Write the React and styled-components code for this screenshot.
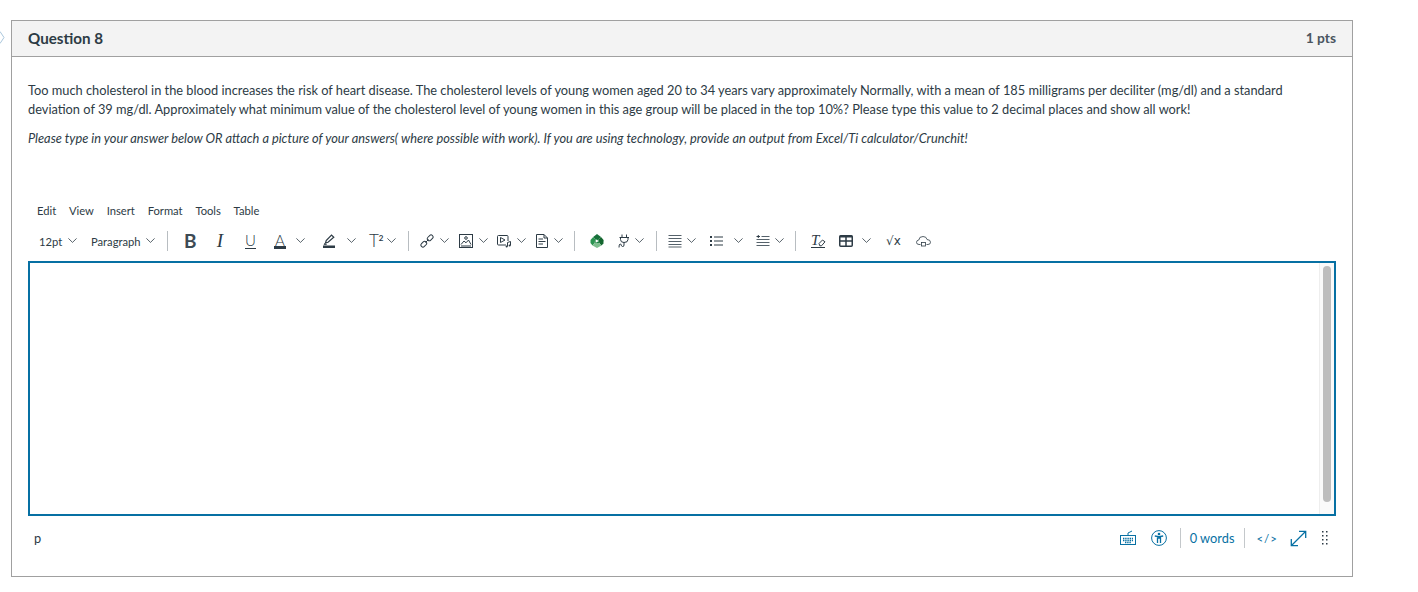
import React from 'react';
import styled, { createGlobalStyle } from 'styled-components';

const GlobalStyle = createGlobalStyle`
  html, body {
    margin: 0;
    padding: 0;
    background: #fff;
    font-family: Lato, "Open Sans", sans-serif;
    color: #2d3b45;
  }
`;

const INK = '#2d3b45';
const BLUE = '#0770a3';

const Page = styled.div`
  position: relative;
  width: 1418px;
  height: 592px;
  padding: 20px 0 0 11px;
  box-sizing: border-box;
  overflow: hidden;
`;

const NavMark = styled.svg`
  position: absolute;
  left: -6px;
  top: 31px;
`;

const Card = styled.section`
  width: 1342px;
  height: 557px;
  box-sizing: border-box;
  border: 1px solid #a0a0a0;
  display: flex;
  flex-direction: column;
`;

const Header = styled.header`
  height: 36px;
  box-sizing: border-box;
  padding: 0 16px 2px;
  background: #f3f3f3;
  border-bottom: 1px solid #a0a0a0;
  display: flex;
  align-items: center;
  justify-content: space-between;
`;

const Title = styled.h2`
  margin: 0;
  font-size: 15.2px;
  font-weight: 700;
  color: ${INK};
`;

const Points = styled.span`
  font-size: 13.8px;
  font-weight: 700;
  color: #4a5560;
`;

const Body = styled.div`
  padding: 24px 16px 0;
  height: 119px;
  box-sizing: border-box;
`;

const Paragraph = styled.p`
  margin: 0 0 10px;
  font-size: 12.8px;
  line-height: 19.2px;
  font-style: ${p => (p.$italic ? 'italic' : 'normal')};
  color: ${INK};
`;

const Editor = styled.div`
  padding: 0 16px;
`;

const MenuBar = styled.nav`
  height: 30px;
  padding-left: 9px;
  display: flex;
  align-items: center;
  gap: 12.8px;
  margin-top: 19px;
`;

const MenuItem = styled.span`
  font-size: 11.2px;
  color: ${INK};
`;

const Toolbar = styled.div`
  height: 32px;
  display: flex;
  align-items: center;
  padding-left: 11px;
`;

const Tool = styled.div`
  width: ${p => p.$w}px;
  flex: none;
  display: flex;
  align-items: center;
  gap: ${p => p.$gap || 0}px;
  font-size: 11.2px;
  color: ${INK};
`;

const Sep = styled.div`
  width: 1px;
  height: 20px;
  flex: none;
  background: #b8bdc1;
  margin-right: ${p => p.$after}px;
`;

const GlyphBold = styled.span`
  font-family: Lato, sans-serif;
  font-size: 19px;
  line-height: 16px;
  font-weight: 700;
  color: #3d4a54;
`;

const GlyphItalic = styled.span`
  font-family: "Liberation Serif", serif;
  font-size: 19px;
  line-height: 16px;
  font-style: italic;
  color: ${INK};
  width: 10px;
  text-align: center;
`;

const GlyphUnder = styled.span`
  font-size: 15px;
  line-height: 13px;
  font-weight: 300;
  color: ${INK};
  width: 11px;
  text-align: center;
  border-bottom: 1px solid ${INK};
  padding-bottom: 1px;
`;

const GlyphColor = styled.span`
  font-size: 15px;
  line-height: 12px;
  font-weight: 300;
  color: ${INK};
  width: 12px;
  text-align: center;
  border-bottom: 3px solid ${INK};
`;

const GlyphSuper = styled.span`
  font-size: 17px;
  line-height: 16px;
  font-weight: 300;
  color: ${INK};
  width: 16px;
  white-space: nowrap;

  sup {
    font-size: 8px;
    font-weight: 700;
    line-height: 0;
    vertical-align: 6px;
  }
`;

const GlyphMath = styled.span`
  font-family: "DejaVu Sans", sans-serif;
  font-size: 12px;
  color: ${INK};
`;

const ClearWrap = styled.span`
  display: block;
  width: 14px;
  height: 14px;
  font-family: "Liberation Serif", serif;
  font-style: italic;
  font-size: 15px;
  line-height: 12px;
  color: ${INK};
  position: relative;
  border-bottom: 1px solid ${INK};
  box-sizing: border-box;
`;

const Area = styled.div`
  height: 255px;
  box-sizing: border-box;
  border: 2px solid ${BLUE};
  margin-top: 4px;
  display: flex;
  justify-content: flex-end;
`;

const Track = styled.div`
  width: 15px;
  background: #fafafa;
  border-left: 1px solid #eeeeee;
  padding: 3px 3px 12px 3px;
  box-sizing: border-box;
  display: flex;
`;

const Thumb = styled.div`
  flex: 1;
  background: #bdbdbd;
  border-radius: 5px;
`;

const StatusBar = styled.div`
  height: 44px;
  display: flex;
  align-items: center;
  justify-content: space-between;
  padding: 0 8px 0 6px;
`;

const PathLabel = styled.span`
  font-size: 12.8px;
  color: ${INK};
`;

const StatusRight = styled.div`
  display: flex;
  align-items: center;
`;

const StatusIcon = styled.svg`
  display: block;
  flex: none;
  margin-left: ${p => p.$ml || 0}px;
  color: ${p => p.$muted ? INK : BLUE};
`;

const Words = styled.span`
  font-size: 12.8px;
  color: ${BLUE};
  padding: 0 10px 0 9px;
  margin: 0 11px 0 13px;
  border-left: 1px solid #c4c8cb;
  border-right: 1px solid #c4c8cb;
  line-height: 20px;
`;

const CodeLabel = styled.span`
  font-size: 11.5px;
  letter-spacing: 1px;
  color: ${BLUE};
`;

const Icon = ({ children, w = 14, h = 14, vb = '0 0 14 14' }) => (
  <svg width={w} height={h} viewBox={vb} fill="none" stroke={INK} strokeWidth="1" style={{ display: 'block', flex: 'none' }}>
    {children}
  </svg>
);

const Chevron = () => (
  <svg width="9" height="5" viewBox="0 0 9 5" fill="none" stroke={INK} strokeWidth="0.8" style={{ display: 'block', flex: 'none', marginTop: -2 }}>
    <path d="M0.4 0.4 L4.5 4.4 L8.6 0.4" />
  </svg>
);

export default function App() {
  return (
    <Page>
      <GlobalStyle />
      <NavMark width="12" height="13" viewBox="0 0 12 13" fill="none" stroke="#a9c6dc" strokeWidth="1">
        <path d="M1 0.5 H6 L10 6.5 L6 12.5 H1" />
      </NavMark>
      <Card>
        <Header>
          <Title>Question 8</Title>
          <Points>1 pts</Points>
        </Header>
        <Body>
          <Paragraph>
            Too much cholesterol in the blood increases the risk of heart disease. The cholesterol levels of young women aged 20 to 34 years vary approximately Normally, with a mean of 185 milligrams per deciliter (mg/dl) and a standard deviation of 39 mg/dl. Approximately what minimum value of the cholesterol level of young women in this age group will be placed in the top 10%? Please type this value to 2 decimal places and show all work!
          </Paragraph>
          <Paragraph $italic>
            Please type in your answer below OR attach a picture of your answers( where possible with work). If you are using technology, provide an output from Excel/Ti calculator/Crunchit!
          </Paragraph>
        </Body>
        <Editor>
          <MenuBar>
            <MenuItem>Edit</MenuItem>
            <MenuItem>View</MenuItem>
            <MenuItem>Insert</MenuItem>
            <MenuItem>Format</MenuItem>
            <MenuItem>Tools</MenuItem>
            <MenuItem>Table</MenuItem>
          </MenuBar>
          <Toolbar>
            <Tool $w={52} $gap={6}>12pt <Chevron /></Tool>
            <Tool $w={76} $gap={5}>Paragraph <Chevron /></Tool>
            <Sep $after={16} />
            <Tool $w={31}><GlyphBold>B</GlyphBold></Tool>
            <Tool $w={30}><GlyphItalic>I</GlyphItalic></Tool>
            <Tool $w={29}><GlyphUnder>U</GlyphUnder></Tool>
            <Tool $w={49} $gap={10}><GlyphColor>A</GlyphColor><Chevron /></Tool>
            <Tool $w={46} $gap={12}>
              <Icon w={12} vb="0 0 12 14">
                <path d="M2.5 9 L3.2 6.5 L8.5 1 L10.8 3.2 L5 8.3 Z" strokeWidth="1.2" />
                <path d="M2.2 9 L1.2 10.5 L3.8 10.2" />
                <rect x="0" y="11.5" width="12" height="2.5" fill={INK} stroke="none" />
              </Icon>
              <Chevron />
            </Tool>
            <Tool $w={39} $gap={2}><GlyphSuper>T<sup>2</sup></GlyphSuper><Chevron /></Tool>
            <Sep $after={11} />
            <Tool $w={39} $gap={6}>
              <Icon>
                <rect x="-3.2" y="-2" width="6.4" height="4" rx="2" transform="translate(3.8 10.2) rotate(-45)" />
                <rect x="-3.2" y="-2" width="6.4" height="4" rx="2" transform="translate(10.2 3.8) rotate(-45)" />
                <path d="M5.5 8.5 L8.5 5.5" />
              </Icon>
              <Chevron />
            </Tool>
            <Tool $w={38} $gap={6}>
              <Icon>
                <rect x="0.5" y="0.5" width="13" height="13" />
                <circle cx="7" cy="4" r="1.3" />
                <path d="M2 10.5 L5 7 L7 8.8 L9.5 6 L12 10.5 M2 12 H12" />
              </Icon>
              <Chevron />
            </Tool>
            <Tool $w={39} $gap={6}>
              <Icon>
                <path d="M9 11 H1.5 Q0.5 11 0.5 10 V2.5 Q0.5 1.5 1.5 1.5 H10 Q11 1.5 11 2.5 V7" />
                <path d="M3.5 3.5 L8 6 L3.5 8.5 Z" />
                <path d="M10.5 8.5 V12.5 M13.5 7.5 V11.5 M10.5 8.5 L13.5 7.5" />
                <circle cx="9.6" cy="12.6" r="1" fill={INK} stroke="none" />
                <circle cx="12.6" cy="11.6" r="1" fill={INK} stroke="none" />
              </Icon>
              <Chevron />
            </Tool>
            <Tool $w={38} $gap={6}>
              <Icon w={12} vb="0 0 12 14">
                <path d="M0.5 0.5 H8 L11.5 4 V13.5 H0.5 Z M8 0.5 V4 H11.5" />
                <path d="M2.5 5 H7 M2.5 7.5 H9.5 M2.5 10 H7" />
              </Icon>
              <Chevron />
            </Tool>
            <Sep $after={15} />
            <Tool $w={28}>
              <Icon>
                <path d="M7 0 L11 3 L8.8 5 L5.2 5 L3.2 3 Z" fill="#17703a" stroke="none" />
                <path d="M0.5 6 L3.2 3 L5.2 5 L4.6 9 L2.5 11.5 L0.5 9 Z" fill="#2b9450" stroke="none" />
                <path d="M11 3 L13.6 6 L13.4 9.5 L11.5 11.5 L9.2 9 L8.8 5 Z" fill="#14662f" stroke="none" />
                <path d="M2.5 11.5 L4.6 9 L9.2 9 L11.5 11.5 L7 14 Z" fill="#7dbd8d" stroke="none" />
                <path d="M4.8 5 L8.8 5 L9.2 9 L4.6 9 Z" fill="#1f8445" stroke="none" />
                <path d="M5.6 5.2 L9 7 L5.6 8.8 Z" fill="#ffffff" stroke="none" />
              </Icon>
            </Tool>
            <Tool $w={38} $gap={5}>
              <Icon w={12} vb="0 0 12 14">
                <path d="M4 0.5 V3.5 M8.5 0.5 V3.5 M1.5 3.5 H11 M2.5 3.5 V5.5 Q2.5 8.5 6 8.5 Q10 8.5 10 5.5 V3.5" />
                <path d="M6 8.5 V11 Q6 12.8 4.5 12.5 Q3.2 12.2 3 10.5 Q2.8 9.8 2 10 Q1 10.5 1 13.5" />
              </Icon>
              <Chevron />
            </Tool>
            <Sep $after={11} />
            <Tool $w={42} $gap={5}>
              <Icon>
                <path d="M0.5 1.5 H13.5 M0.5 4.5 H13.5 M0.5 7.5 H13.5 M0.5 10.5 H13.5 M0.5 13 H13.5" strokeWidth="1" stroke="#56626b" />
              </Icon>
              <Chevron />
            </Tool>
            <Tool $w={46} $gap={10}>
              <Icon>
                <rect x="0" y="2" width="2" height="2" fill={INK} stroke="none" />
                <rect x="0" y="6" width="2" height="2" fill={INK} stroke="none" />
                <rect x="0" y="10" width="2" height="2" fill={INK} stroke="none" />
                <path d="M4 3 H13 M4 7 H13 M4 11 H13" />
              </Icon>
              <Chevron />
            </Tool>
            <Tool $w={39} $gap={5}>
              <Icon>
                <path d="M5.5 2.5 H13.5 M0.5 5.5 H13.5 M0.5 8.5 H13.5 M0.5 11.5 H13.5" stroke="#56626b" />
                <path d="M0.5 2.5 H4 M2.3 1 V4" />
              </Icon>
              <Chevron />
            </Tool>
            <Sep $after={15} />
            <Tool $w={28}>
              <ClearWrap>
                T
                <svg width="8" height="8" viewBox="0 0 8 8" fill="#fff" stroke={INK} strokeWidth="1" style={{ position: 'absolute', right: -1, bottom: 0 }}>
                  <path d="M1 4.5 L4.5 1 L7 2.8 L3.5 6.8 H1.8 Z" />
                </svg>
              </ClearWrap>
            </Tool>
            <Tool $w={47} $gap={9}>
              <Icon>
                <rect x="0.75" y="1.75" width="12.5" height="10.5" rx="1" strokeWidth="1.5" />
                <path d="M0.75 7 H13.25 M7 1.75 V12.25" strokeWidth="1.5" />
                <path d="M0.75 2.5 H13.25" strokeWidth="2" />
              </Icon>
              <Chevron />
            </Tool>
            <Tool $w={30}><GlyphMath>√x</GlyphMath></Tool>
            <Tool $w={16}>
              <Icon w={15} vb="0 0 15 14">
                <path d="M4.5 10.5 H3 Q0.5 10.5 0.5 8.3 Q0.5 6.3 2.8 6 Q3 2.5 7 2.5 Q10.5 2.5 11 5.5 Q14.5 5.7 14.5 8.2 Q14.5 10.5 12 10.5 H10.5" strokeWidth="0.8" />
                <rect x="5.5" y="8.5" width="4" height="3.5" strokeWidth="0.8" />
              </Icon>
            </Tool>
          </Toolbar>
          <Area>
            <Track><Thumb /></Track>
          </Area>
          <StatusBar>
            <PathLabel>p</PathLabel>
            <StatusRight>
              <StatusIcon width="18" height="16" viewBox="0 0 18 16" fill="none" stroke="currentColor">
                <rect x="1.5" y="5.5" width="15" height="9" />
                <path d="M9 5 V3 L13 1" />
                <path d="M4 8.5 H14 M4 10.5 H14 M6 12.5 H12" strokeWidth="1.3" strokeDasharray="1.4 0.8" />
              </StatusIcon>
              <StatusIcon $ml={14} width="16" height="16" viewBox="0 0 16 16" fill="none" stroke="currentColor">
                <circle cx="8" cy="8" r="7.4" />
                <circle cx="8" cy="4" r="1.3" fill="currentColor" stroke="none" />
                <path d="M3.8 6 L8 6.6 L12.2 6 M6.5 6.5 V13 M9.5 6.5 V13 M7 8 H9" strokeWidth="1.3" />
              </StatusIcon>
              <Words>0 words</Words>
              <CodeLabel>&lt;/&gt;</CodeLabel>
              <StatusIcon $ml={12} width="17" height="17" viewBox="0 0 17 17" fill="none" stroke="currentColor" strokeWidth="1.3">
                <path d="M1.5 15.5 L15.5 1.5 M9 1.3 H15.7 V8 M1.3 9 V15.7 H8" />
              </StatusIcon>
              <StatusIcon $ml={15} $muted width="6" height="16" viewBox="0 0 6 16" fill="currentColor" stroke="none">
                <rect x="0" y="1" width="1.5" height="1.5" />
                <rect x="4" y="1" width="1.5" height="1.5" />
                <rect x="0" y="5" width="1.5" height="1.5" />
                <rect x="4" y="5" width="1.5" height="1.5" />
                <rect x="0" y="9" width="1.5" height="1.5" />
                <rect x="4" y="9" width="1.5" height="1.5" />
                <rect x="0" y="13" width="1.5" height="1.5" />
                <rect x="4" y="13" width="1.5" height="1.5" />
              </StatusIcon>
            </StatusRight>
          </StatusBar>
        </Editor>
      </Card>
    </Page>
  );
}
